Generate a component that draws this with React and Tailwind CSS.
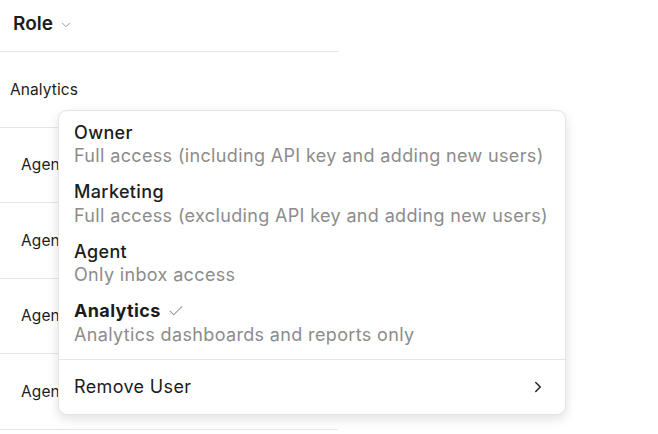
import React from 'react';
import { ChevronDown, ChevronRight, Check } from 'lucide-react';

const roles = [
  { name: 'Owner', desc: 'Full access (including API key and adding new users)' },
  { name: 'Marketing', desc: 'Full access (excluding API key and adding new users)' },
  { name: 'Agent', desc: 'Only inbox access' },
  { name: 'Analytics', desc: 'Analytics dashboards and reports only', selected: true },
];

const rows = ['Analytics', 'Agent', 'Agent', 'Agent', 'Agent'];

const App = () => {
  return (
    <div className="relative w-[658px] h-[434px] bg-white overflow-hidden text-[#1c1c1c]" style={{ fontFamily: 'Inter, "Noto Sans", sans-serif' }}>
      {/* Table column */}
      <div className="w-[338px]">
        <div className="h-[52px] flex items-center pl-[13px] pb-[2px] border-b border-[#e6e6e6]">
          <span className="text-[19px] font-semibold">Role</span>
          <ChevronDown className="w-[14px] h-[14px] ml-[6px] text-[#8a8a8a]" strokeWidth={1.5} />
        </div>
        {rows.map((r, i) => (
          <div
            key={i}
            className={`h-[75.5px] flex items-center border-b border-[#e6e6e6] text-[15.5px] tracking-[0.1px] ${i === 0 ? 'pl-[10px]' : 'pl-[21px]'}`}
          >
            {r}
          </div>
        ))}
      </div>

      {/* Dropdown */}
      <div className="absolute left-[58px] top-[110px] w-[508px] bg-white rounded-[9px] border border-[#e4e4e4] shadow-[0_4px_12px_rgba(0,0,0,0.12)]">
        <div className="pt-[9px] pb-[12px] pl-[15px] pr-[16px] flex flex-col gap-[11.5px] tracking-[0.35px]">
          {roles.map((r) => (
            <div key={r.name} className="flex flex-col">
              <div className="flex items-center h-[24px]">
                <span className={`text-[18px] ${r.selected ? 'font-bold' : 'font-medium'}`}>{r.name}</span>
                {r.selected && <Check className="w-[18px] h-[18px] ml-[6px] text-[#8a8a8a]" strokeWidth={1.4} />}
              </div>
              <div className="text-[18px] leading-[24px] text-[#8c8c8c]">{r.desc}</div>
            </div>
          ))}
        </div>
        <div className="border-t border-[#e6e6e6] h-[55px] pl-[15px] pr-[18px] flex items-center justify-between tracking-[0.35px]">
          <span className="text-[18px]">Remove User</span>
          <ChevronRight className="w-[18px] h-[18px] text-[#222]" strokeWidth={2} />
        </div>
      </div>
    </div>
  );
};

export default App;
